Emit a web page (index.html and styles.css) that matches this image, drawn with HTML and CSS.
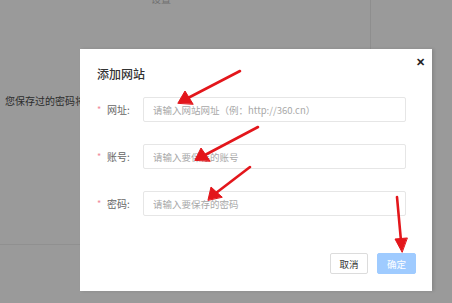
FILE: index.html
```html
<!DOCTYPE html>
<html lang="zh-CN">
  <head>
    <meta charset="utf-8" />
    <title>添加网站</title>
    <link rel="stylesheet" href="styles.css">
  </head>
  <body>
    <div class="page">
      <div class="panel">
        <p class="panel-top">设置</p>
        <p class="panel-note">您保存过的密码将会</p>
      </div>
    </div>

    <div class="modal">
      <span class="close">&#x2715;</span>
      <h2 class="modal-title">添加网站</h2>
      <form class="form">
        <div class="row">
          <span class="req">*</span>
          <label>网址:</label>
          <input type="text" placeholder="请输入网站网址（例：http://360.cn）" />
        </div>
        <div class="row">
          <span class="req">*</span>
          <label>账号:</label>
          <input type="text" placeholder="请输入要保存的账号" />
        </div>
        <div class="row">
          <span class="req">*</span>
          <label>密码:</label>
          <input type="text" placeholder="请输入要保存的密码" />
        </div>
      </form>
      <div class="actions">
        <button class="btn">取消</button>
        <button class="btn primary">确定</button>
      </div>
    </div>

    <!-- annotation arrows -->
    <svg class="arrows" width="452" height="303" viewBox="0 0 452 303">
      <g stroke="#e3161b" stroke-width="2.6" stroke-linecap="round" fill="#e3161b">
        <line x1="240" y1="71" x2="188" y2="98" />
        <polygon points="178,103 185,91 193,104" stroke-width="1" />
        <line x1="258" y1="127" x2="205" y2="155" />
        <polygon points="195,160 201,148 210,161" stroke-width="1" />
        <line x1="250" y1="167" x2="216" y2="193" />
        <polygon points="208,200 211,187 222,197" stroke-width="1" />
        <line x1="397" y1="197" x2="401" y2="241" />
        <polygon points="402,252 395,239 407,238" stroke-width="1" />
      </g>
    </svg>
  </body>
</html>
```

FILE: styles.css
```css
* {
  margin: 0;
  padding: 0;
  box-sizing: border-box;
}

html, body {
  width: 452px;
  height: 303px;
  overflow: hidden;
  font-family: "Noto Sans CJK SC", "Liberation Sans", sans-serif;
  background-color: #9a9a9a;
  color: #333;
}

/* Dimmed page behind the dialog */
.page {
  width: 452px;
  height: 303px;
}

.panel {
  width: 371px;
  height: 251px;
  border-right: 1px solid #8e8e8e;
  border-bottom: 1px solid #909090;
}

.panel-top {
  font-size: 10px;
  line-height: 10px;
  color: #707070;
  padding-left: 151px;
  margin-top: -6px;
}

.panel-note {
  font-size: 10px;
  line-height: 12px;
  color: #2c2c2c;
  padding-left: 5px;
  margin-top: 91px;
  white-space: nowrap;
}

/* Dialog */
.modal {
  position: absolute;
  left: 80px;
  top: 49px;
  width: 352px;
  height: 242px;
  background: #fff;
  padding: 17px 16px 0 17px;
  box-shadow: 2px 0 3px rgba(0, 0, 0, 0.12);
}

.close {
  position: absolute;
  right: 7px;
  top: 4px;
  font-size: 11px;
  font-weight: bold;
  color: #222;
}

.modal-title {
  font-size: 12px;
  font-weight: 500;
  line-height: 16px;
  color: #333;
}

.form {
  margin-top: 15px;
  display: flex;
  flex-direction: column;
  gap: 22px;
}

.row {
  display: flex;
  align-items: center;
  padding-right: 10px;
}

.req {
  width: 10px;
  color: #f08a9a;
  font-size: 9px;
}

.row label {
  width: 36px;
  font-size: 10px;
  color: #666;
}

.row input {
  width: 263px;
  height: 25px;
  border: 1px solid #e6e6e6;
  border-radius: 2px;
  padding: 0 9px;
  font-family: inherit;
  font-size: 9.5px;
  outline: none;
}

.row input::placeholder {
  color: #a8a8a8;
}

.actions {
  display: flex;
  justify-content: flex-end;
  gap: 9px;
  margin-top: 37px;
}

.btn {
  width: 38px;
  height: 21px;
  border: 1px solid #dcdcdc;
  border-radius: 2px;
  background: #fff;
  font-family: inherit;
  font-size: 9.5px;
  color: #333;
}

.btn.primary {
  width: 39px;
  border-color: #9fcbff;
  background: #9fcbff;
  color: #fff;
}

.arrows {
  position: absolute;
  left: 0;
  top: 0;
  pointer-events: none;
}
```
